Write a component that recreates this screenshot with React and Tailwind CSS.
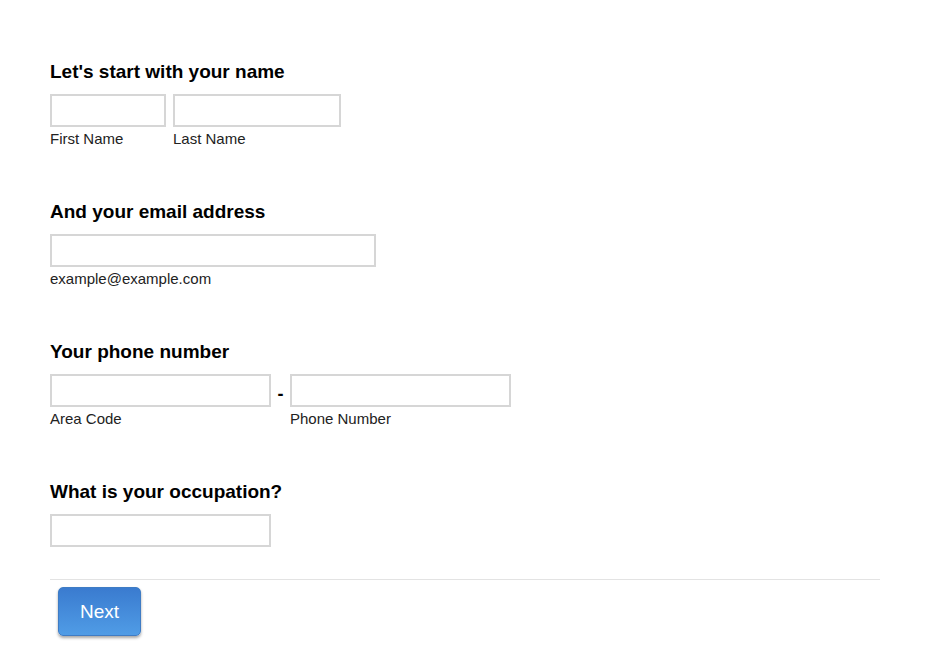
import React from "react";

const font = { fontFamily: '"Liberation Sans", Arial, sans-serif' };

function Field({ w }) {
  return <div className={`${w} h-[33px] border-2 border-[#d6d6d6] bg-white`} />;
}

function Heading({ children }) {
  return <h2 className="text-[19px] leading-[24px] font-bold text-black mb-[10px]">{children}</h2>;
}

function Label({ children, w }) {
  return <div className={`${w} text-[15px] leading-[18px] text-[#222] mt-[3px]`}>{children}</div>;
}

export default function App() {
  return (
    <div className="w-[930px] h-[670px] bg-white px-[50px] pt-[60px]" style={font}>
      <div className="flex flex-col gap-[52px]">
        <section>
          <Heading>Let's start with your name</Heading>
          <div className="flex gap-[7px]">
            <div>
              <Field w="w-[116px]" />
              <Label>First Name</Label>
            </div>
            <div>
              <Field w="w-[168px]" />
              <Label>Last Name</Label>
            </div>
          </div>
        </section>
        <section>
          <Heading>And your email address</Heading>
          <Field w="w-[326px]" />
          <Label>example@example.com</Label>
        </section>
        <section>
          <Heading>Your phone number</Heading>
          <div className="flex">
            <div>
              <Field w="w-[221px]" />
              <Label>Area Code</Label>
            </div>
            <div className="w-[19px] h-[33px] flex items-center justify-center text-[18px] font-bold pt-[7px]">-</div>
            <div>
              <Field w="w-[221px]" />
              <Label>Phone Number</Label>
            </div>
          </div>
        </section>
        <section>
          <Heading>What is your occupation?</Heading>
          <Field w="w-[221px]" />
        </section>
      </div>
      <div className="mt-[32px] border-t border-[#e3e3e3] w-[830px]" />
      <div className="pl-[8px] pt-[7px]">
        <button className="w-[83px] h-[49px] pt-[2px] rounded-[5px] border border-[#3f7cc4] bg-gradient-to-b from-[#3a7bcf] to-[#509ce6] text-white text-[19px] shadow-[0_2px_3px_rgba(0,0,0,0.35)]">
          Next
        </button>
      </div>
    </div>
  );
}
